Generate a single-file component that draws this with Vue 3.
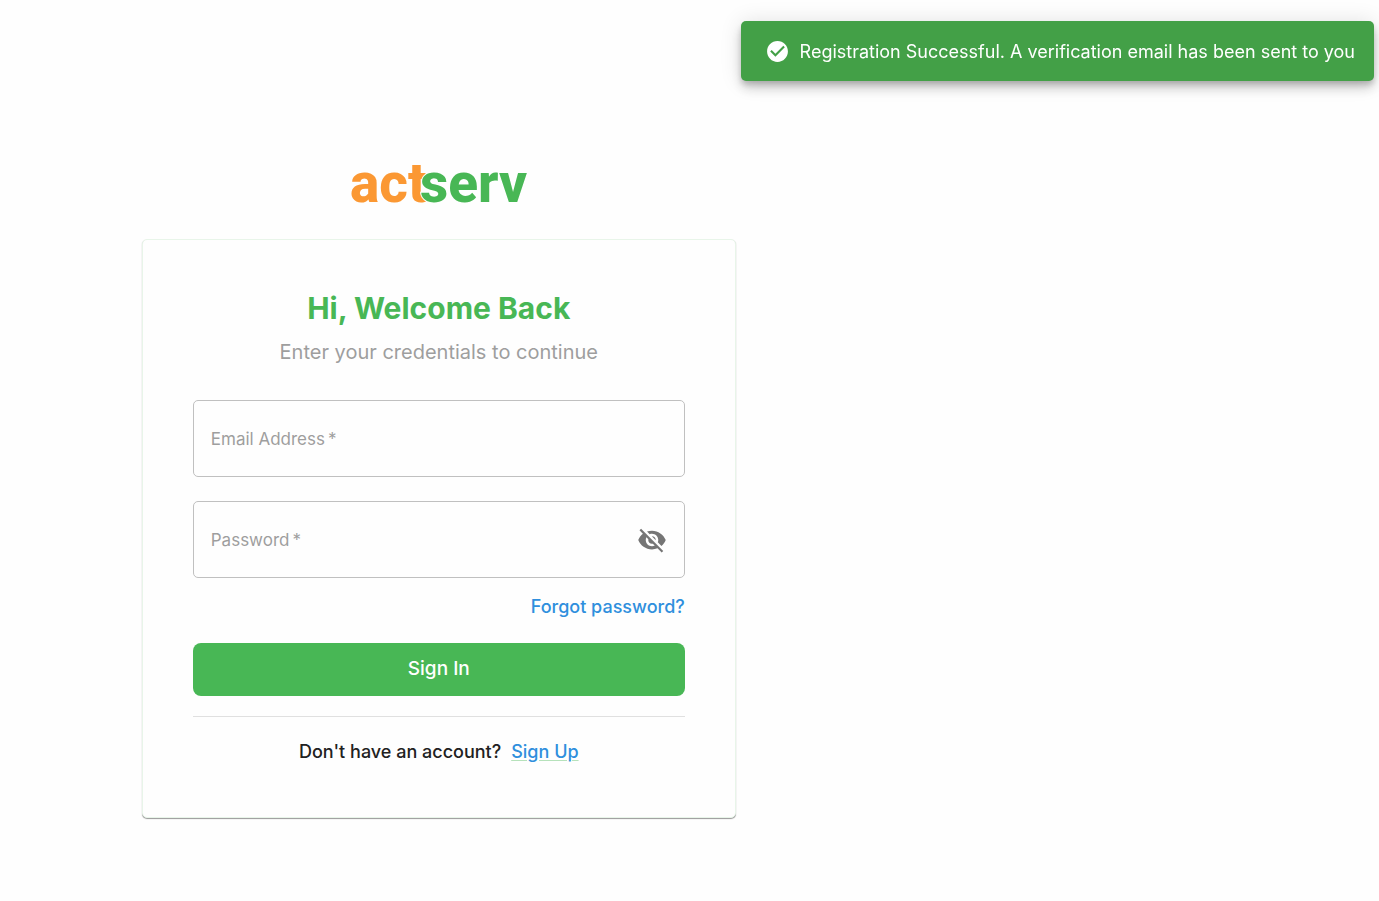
<script setup>
import { ref } from 'vue'

const email = ref('')
const password = ref('')
const showPassword = ref(false)
</script>

<template>
  <div class="page">
    <div class="toast" role="alert">
      <svg class="toast-icon" viewBox="0 0 24 24" aria-hidden="true">
        <path fill="currentColor" d="M12 2C6.48 2 2 6.48 2 12s4.48 10 10 10 10-4.48 10-10S17.52 2 12 2m-2 15-5-5 1.41-1.41L10 14.17l7.59-7.59L19 8z" />
      </svg>
      <span class="toast-text">Registration Successful. A verification email has been sent to you</span>
    </div>

    <main class="panel">
      <svg class="logo" viewBox="0 0 178 50" role="img" aria-label="actserv">
        <text class="logo-act" x="0" y="46">act</text>
        <text class="logo-serv" x="70" y="46">serv</text>
      </svg>

      <section class="card">
        <h1>Hi, Welcome Back</h1>
        <p class="subtitle">Enter your credentials to continue</p>

        <form @submit.prevent>
          <div class="field">
            <input id="email" v-model="email" type="email" required />
            <label v-show="!email" for="email">Email Address<span>&thinsp;*</span></label>
          </div>
          <div class="field">
            <input id="password" v-model="password" :type="showPassword ? 'text' : 'password'" required />
            <label v-show="!password" for="password">Password<span>&thinsp;*</span></label>
            <button class="eye" type="button" aria-label="Toggle password visibility" @click="showPassword = !showPassword">
              <svg viewBox="0 0 24 24" aria-hidden="true">
                <path fill="currentColor" d="M12 7c2.76 0 5 2.24 5 5 0 .65-.13 1.26-.36 1.83l2.92 2.92c1.51-1.26 2.7-2.89 3.43-4.75-1.73-4.39-6-7.5-11-7.5-1.4 0-2.74.25-3.98.7l2.16 2.16C10.74 7.13 11.35 7 12 7M2 4.27l2.28 2.28.46.46C3.08 8.3 1.78 10.02 1 12c1.73 4.39 6 7.5 11 7.5 1.55 0 3.03-.3 4.38-.84l.42.42L19.73 22 21 20.73 3.27 3zM7.53 9.8l1.55 1.55c-.05.21-.08.43-.08.65 0 1.66 1.34 3 3 3 .22 0 .44-.03.65-.08l1.55 1.55c-.67.33-1.41.53-2.2.53-2.76 0-5-2.24-5-5 0-.79.2-1.53.53-2.2m4.31-.78 3.15 3.15.02-.16c0-1.66-1.34-3-3-3z" />
              </svg>
            </button>
          </div>
          <a class="forgot" href="#">Forgot password?</a>
          <button class="submit" type="submit">Sign In</button>
        </form>

        <hr />
        <p class="signup">Don't have an account? <a href="#">Sign Up</a></p>
      </section>
    </main>
  </div>
</template>

<style>
body {
  margin: 0;
  background: #fefefe;
}
</style>

<style scoped>
.page {
  box-sizing: border-box;
  min-height: 100vh;
  display: grid;
  grid-template-columns: 7fr 4fr;
  align-items: center;
  padding: 76px 0 0;
  font-family: Inter, "Liberation Sans", sans-serif;
  color: #212121;
}
.toast {
  position: fixed;
  top: 21px;
  right: 5px;
  box-sizing: border-box;
  min-height: 60px;
  display: flex;
  align-items: center;
  gap: 10px;
  padding: 8px 19px 8px 24px;
  border-radius: 5px;
  background: #43a047;
  color: #fff;
  font-size: 18px;
  line-height: 26px;
  box-shadow: 0 4px 6px -1px rgba(0, 0, 0, 0.2), 0 8px 12px 0 rgba(0, 0, 0, 0.14), 0 1px 22px 0 rgba(0, 0, 0, 0.12);
}
.toast-text {
  padding-top: 2px;
}
.toast-icon {
  width: 25px;
  height: 25px;
  flex: none;
}
.panel {
  display: flex;
  flex-direction: column;
  align-items: center;
  align-self: start;
  padding: 80px 24px;
}
.logo {
  width: 178px;
  height: 50px;
  overflow: visible;
  margin-bottom: 33px;
}
.logo text {
  font-family: Roboto, "Liberation Sans", sans-serif;
  font-size: 55px;
  font-weight: 800;
}
.logo-act {
  fill: #fb9833;
}
.logo-serv {
  fill: #48b755;
  stroke: #fefefe;
  stroke-width: 2px;
  paint-order: stroke;
}
.card {
  box-sizing: border-box;
  width: 100%;
  max-width: 594px;
  padding: 48px 50px 52px;
  border: 1px solid #e8f5e9;
  border-radius: 5px;
  background: #fefefe;
  box-shadow: 0 1px 1px rgba(0, 0, 0, 0.4);
}
h1 {
  margin: 0;
  font-size: 30px;
  line-height: 40px;
  font-weight: 700;
  text-align: center;
  color: #48b755;
}
.subtitle {
  margin: 8px 0 32px;
  font-size: 20px;
  line-height: 32px;
  text-align: center;
  color: #9e9e9e;
}
form {
  display: flex;
  flex-direction: column;
}
.field {
  position: relative;
  height: 77px;
  margin-bottom: 24px;
}
.field input {
  box-sizing: border-box;
  width: 100%;
  height: 100%;
  padding: 0 64px 0 17px;
  border: 1px solid #c0c0c0;
  border-radius: 5px;
  background: transparent;
  font: 17px Inter, "Liberation Sans", sans-serif;
}
.field label {
  position: absolute;
  top: 26px;
  left: 18px;
  font-size: 17px;
  line-height: 26px;
  color: #9e9e9e;
  pointer-events: none;
}
.eye {
  position: absolute;
  top: 24px;
  right: 18px;
  width: 30px;
  height: 30px;
  padding: 0;
  border: 0;
  background: none;
  color: #757575;
}
.eye svg {
  display: block;
}
.forgot {
  align-self: flex-end;
  margin: -8px 0 23px;
  font-size: 18px;
  line-height: 26px;
  font-weight: 500;
  color: #2f8fdd;
  text-decoration: none;
}
.submit {
  height: 53px;
  padding: 0 0 2px;
  border: 0;
  border-radius: 8px;
  background: #48b755;
  color: #fff;
  font: 500 19px Inter, "Liberation Sans", sans-serif;
}
hr {
  height: 1px;
  margin: 20px 0 22px;
  border: 0;
  background: #e0e0e0;
}
.signup {
  display: flex;
  justify-content: center;
  gap: 10px;
  margin: 0;
  font-size: 18px;
  line-height: 26px;
  font-weight: 500;
}
.signup a {
  color: #2f8fdd;
  text-decoration-color: #b6e2bb;
  text-underline-offset: 2px;
}
</style>
